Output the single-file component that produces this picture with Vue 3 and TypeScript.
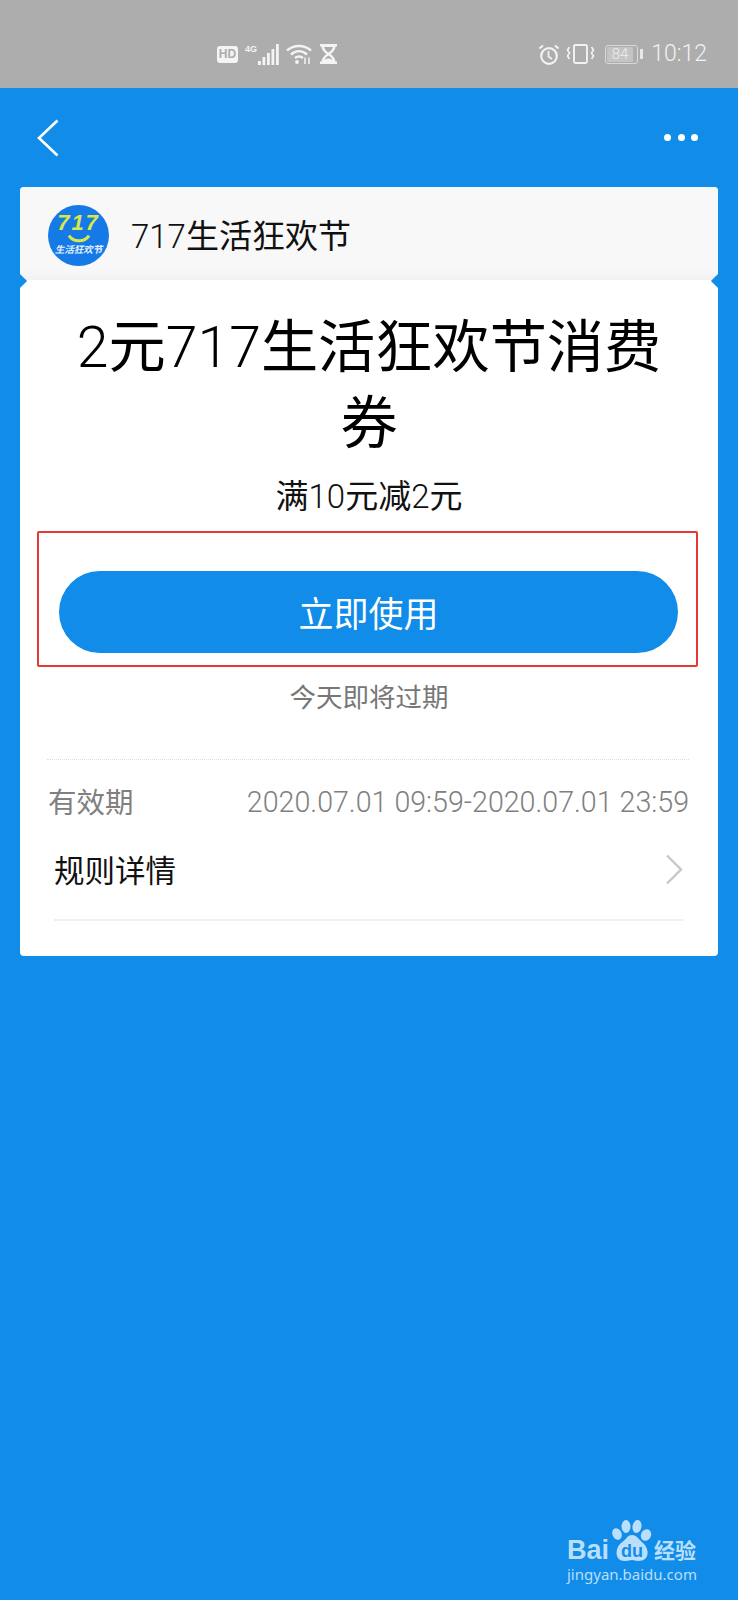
<script setup lang="ts">
const signalBars = [4, 8, 12, 16, 21]
</script>

<template>
  <div class="page">
    <div class="status">
      <div class="status-left">
        <span class="hd">HD</span>
        <span class="net">4G</span>
        <svg class="signal" width="21" height="21" viewBox="0 0 21 21">
          <rect
            v-for="(h, i) in signalBars"
            :key="i"
            :x="i * 4.5"
            :y="21 - h"
            width="2.800"
            :height="h"
            fill="#f4f4f4"
          />
        </svg>
        <svg class="wifi" width="26" height="20" viewBox="0 0 26 20" fill="none" stroke="#f4f4f4" stroke-width="2.400">
          <path d="M1 6.500C8 .5 18 .5 25 6.500" />
          <path d="M5 10.500C10 6 16 6 21 10.500" />
          <path d="M9 14C11.500 12 14.500 12 17 14" />
          <circle cx="11" cy="18" r="1.900" fill="#f4f4f4" stroke="none" />
          <path d="M19 13.500v6.500M23 13.500v6.500" stroke-width="1.500" />
        </svg>
        <svg class="glass" width="17" height="20" viewBox="0 0 17 20">
          <path d="M0 0h17v2.500h-1.500c0 3-2.500 5.500-5 7.500 2.500 2 5 4.500 5 7.500H17V20H0v-2.500h1.500c0-3 2.500-5.500 5-7.500-2.500-2-5-4.500-5-7.500H0z" fill="#f4f4f4" />
          <path d="M4 3h9c-.5 2-2.500 4.500-4.500 5.500C6.500 7.500 4.500 5 4 3zM8.500 11.500c1.500 1 3.200 2.500 3.800 4.200-1.500-.9-2.500-1.200-3.800-1.200s-2.300.3-3.800 1.200c.6-1.700 2.300-3.200 3.800-4.200z" fill="#adadad" />
        </svg>
      </div>
      <div class="status-right">
        <svg width="22" height="21" viewBox="0 0 22 21" fill="none" stroke="#f2f2f2" stroke-width="2.200">
          <circle cx="11" cy="12" r="7.800" />
          <path d="M10.500 7v5.500l3.500 2.500" stroke-width="1.800" />
          <path d="M1.500 4.500L5 1.500M20.500 4.500L17 1.500" />
        </svg>
        <svg class="vibrate" width="29" height="20" viewBox="0 0 29 20" fill="none" stroke="#f2f2f2" stroke-width="1.900">
          <rect x="8" y="1" width="13" height="18" rx="1.500" />
          <path d="M3.500 3L1.500 6l2 3-2 3 2 3M25.500 3l2 3-2 3 2 3-2 3" stroke-width="1.600" />
        </svg>
        <div class="battery">
          <span class="battery-body"><span class="battery-level">84</span></span>
          <span class="battery-tip"></span>
        </div>
        <span class="time">10:12</span>
      </div>
    </div>

    <div class="nav">
      <svg width="24" height="38" viewBox="0 0 24 38" fill="none" stroke="#fff" stroke-width="2.600">
        <path d="M21.500 1.500L3 19l18.500 17.500" />
      </svg>
      <div class="dots"><i></i><i></i><i></i></div>
    </div>

    <div class="card">
      <div class="card-head">
        <div class="logo">
          <span class="logo-num">717</span>
          <svg class="logo-smile" width="24" height="9" viewBox="0 0 24 9" fill="none" stroke="#d8e84a" stroke-width="3">
            <path d="M2 1.500C6 8.500 18 8.500 22 1.500" />
          </svg>
          <span class="logo-text">生活狂欢节</span>
        </div>
        <span class="shop"><span class="lt">717</span>生活狂欢节</span>
      </div>

      <div class="card-body">
        <h1 class="title"><span class="lt">2</span>元<span class="lt">717</span>生活狂欢节消费券</h1>
        <p class="sub">满<span class="lt">10</span>元减<span class="lt">2</span>元</p>
        <div class="mark">
          <button class="use">立即使用</button>
        </div>
        <p class="hint">今天即将过期</p>
        <div class="dotted"></div>
        <div class="valid">
          <span class="valid-label">有效期</span>
          <span class="dates">2020.07.01 09:59-2020.07.01 23:59</span>
        </div>
        <div class="rules">
          <span>规则详情</span>
          <svg width="18" height="31" viewBox="0 0 18 31" fill="none" stroke="#c8c8c8" stroke-width="2.400">
            <path d="M2 1.500L16 15.500 2 29.500" />
          </svg>
        </div>
      </div>
      <i class="notch left"></i>
      <i class="notch right"></i>
    </div>

    <div class="watermark">
      <div class="wm-top">
        <span class="wm-bai">Bai</span>
        <div class="paw">
          <svg width="40" height="42" viewBox="0 0 40 42" fill="#b9dffb">
            <ellipse cx="5" cy="14" rx="4.500" ry="6" transform="rotate(-25 5 14)" />
            <ellipse cx="14" cy="6.500" rx="4.500" ry="6.500" />
            <ellipse cx="25" cy="6.500" rx="4.500" ry="6.500" transform="rotate(10 25 6.500)" />
            <ellipse cx="34" cy="15" rx="5" ry="6" transform="rotate(25 34 15)" />
            <path d="M20 15c5 0 6 4 11 8 6 5 8 18-5 18-3 0-4-1-6-1s-4 1-7 1C2 41 3 28 9 23c5-3 6-8 11-8z" />
          </svg>
          <span class="wm-du">du</span>
        </div>
        <span class="wm-cn">经验</span>
      </div>
      <div class="wm-url">jingyan.baidu.com</div>
    </div>
  </div>
</template>

<style>
html,
body {
  margin: 0;
  background: #118ce9;
}
</style>

<style scoped>
.page {
  position: relative;
  width: 738px;
  height: 1600px;
  background: #118ce9;
  overflow: hidden;
  font-family: Roboto, "Noto Sans CJK SC", sans-serif;
  color: #000;
}

.lt {
  font-weight: 300;
}

.status {
  height: 88px;
  box-sizing: border-box;
  background: #adadad;
  display: flex;
  align-items: center;
  justify-content: space-between;
  padding: 20px 31px 0 217px;
}

.status-left,
.status-right {
  display: flex;
  align-items: center;
}

.hd {
  width: 21px;
  height: 17px;
  border-radius: 3px;
  background: #f4f4f4;
  color: #adadad;
  font: 700 12px/17px "Liberation Sans", sans-serif;
  text-align: center;
}

.net {
  color: #f4f4f4;
  font: 700 9px/10px "Liberation Sans", sans-serif;
  margin: -11px 0 0 7px;
}

.signal {
  margin-left: 1px;
}

.wifi {
  margin-left: 7px;
}

.glass {
  margin-left: 8px;
}

.vibrate {
  margin-left: 6px;
}

.battery {
  display: flex;
  align-items: center;
  margin-left: 10px;
}

.battery-body {
  width: 33px;
  height: 19px;
  border: 1px solid #d8d8d8;
  border-radius: 3px;
  padding: 1px;
  box-sizing: border-box;
  display: block;
}

.battery-level {
  display: block;
  width: 26px;
  height: 15px;
  background: #c4c4c4;
  border-radius: 1px;
  color: #eee;
  font: 300 15px/15px Roboto, sans-serif;
  text-align: center;
}

.battery-tip {
  width: 3px;
  height: 10px;
  background: #e8e8e8;
  margin-left: 2px;
}

.time {
  margin-left: 8px;
  color: #f2f2f2;
  font: 300 23px/28px Roboto, sans-serif;
}

.nav {
  height: 99px;
  display: flex;
  align-items: center;
  justify-content: space-between;
  padding: 0 40px 0 36px;
}

.dots {
  display: flex;
  gap: 6.500px;
}

.dots i {
  width: 7px;
  height: 7px;
  border-radius: 50%;
  background: #fff;
}

.card {
  position: relative;
  margin: 0 20px;
  border-radius: 4px;
  overflow: hidden;
  background: #fff;
}

.card-head {
  height: 93px;
  box-sizing: border-box;
  background: linear-gradient(#f8f8f8 88%, #f1f1f1);
  display: flex;
  align-items: center;
  padding: 4px 0 0 28px;
}

.logo {
  width: 61px;
  height: 61px;
  border-radius: 50%;
  background: #1579e6;
  display: flex;
  flex-direction: column;
  align-items: center;
  overflow: hidden;
}

.logo-num {
  margin-top: 9px;
  color: #d8e84a;
  font: italic 700 22px/18px "Liberation Sans", sans-serif;
  letter-spacing: 2px;
}

.logo-smile {
  margin-top: 2px;
}

.logo-text {
  margin-top: 1px;
  color: #e4f0ff;
  font-size: 9.500px;
  font-style: italic;
  font-weight: 700;
  line-height: 12px;
  white-space: nowrap;
}

.shop {
  margin: 2px 0 0 22px;
  font-size: 33px;
  line-height: 40px;
  color: #111;
}

.card-body {
  padding: 30px 20px 35px 17px;
  text-align: center;
}

.title {
  margin: 0 -20px 0 -17px;
  padding: 0 30px;
  font-size: 57.200px;
  line-height: 76px;
  font-weight: 400;
}

.sub {
  margin: 13px 0 0 3px;
  font-size: 33px;
  line-height: 44px;
  color: #111;
}

.mark {
  margin-top: 12px;
  height: 136px;
  box-sizing: border-box;
  border: 2px solid #e43a33;
  border-radius: 2px;
  padding: 38px 18px 0 20px;
}

.use {
  display: block;
  width: 100%;
  height: 82px;
  border: 0;
  border-radius: 41px;
  padding: 0 0 2px;
  background: #118ce9;
  color: #fff;
  font: inherit;
  font-size: 35px;
}

.hint {
  margin: 11px 0 0 3px;
  font-size: 26.500px;
  line-height: 40px;
  color: #777;
}

.dotted {
  margin: 41px 9px 0 10px;
  border-top: 1px dotted #dedede;
}

.valid {
  margin: 18px 9px 0 11px;
  height: 44px;
  display: flex;
  align-items: center;
  justify-content: space-between;
  color: #808080;
}

.valid-label {
  font-size: 28.500px;
}

.dates {
  font-size: 28.600px;
  font-weight: 300;
  padding-top: 4px;
}

.rules {
  margin: 2px 15px 0 17px;
  height: 97px;
  box-sizing: border-box;
  border-bottom: 2px solid #f0f0f0;
  padding: 0 0 5px;
  display: flex;
  align-items: center;
  justify-content: space-between;
  font-size: 30.500px;
  color: #111;
}

.notch {
  position: absolute;
  top: 89px;
  width: 10px;
  height: 10px;
  background: #118ce9;
  transform: rotate(45deg);
}

.notch.left {
  left: -5px;
}

.notch.right {
  right: -5px;
}

.watermark {
  position: absolute;
  left: 567px;
  top: 1520px;
  color: #b9dffb;
}

.wm-top {
  display: flex;
  align-items: flex-end;
  height: 42px;
}

.wm-bai {
  font: 700 27px/27px "Liberation Sans", sans-serif;
  margin-bottom: -2px;
}

.paw {
  position: relative;
  width: 40px;
  height: 42px;
  margin-left: 3px;
}

.wm-du {
  position: absolute;
  left: 9px;
  bottom: 1px;
  color: #118ce9;
  font: 700 18px/20px "Liberation Sans", sans-serif;
}

.wm-cn {
  font-size: 21px;
  line-height: 26px;
  font-weight: 700;
  margin: 0 0 -2px 2px;
}

.wm-url {
  margin-top: 3px;
  font-size: 15px;
  line-height: 18px;
  font-family: "Noto Sans", sans-serif;
  white-space: nowrap;
}
</style>
